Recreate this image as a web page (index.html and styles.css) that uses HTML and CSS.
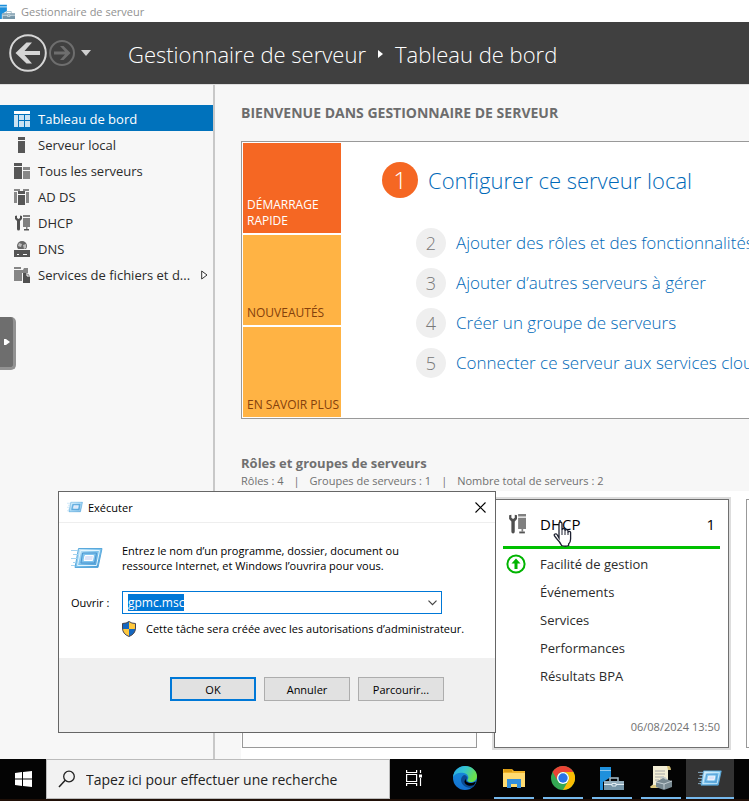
FILE: index.html
```html
<!DOCTYPE html>
<html lang="fr">
<head>
<meta charset="utf-8">
<title>Gestionnaire de serveur</title>
<link rel="stylesheet" href="styles.css">
</head>
<body>
<svg class="defs" aria-hidden="true">
  <defs>
    <symbol id="i-dhcp" viewBox="0 0 16 16">
      <path d="M1 1v3l2 2v8q0 1.500 1.500 1.500T6 14V6l2-2V1L6 .5V3L4.500 4 3 3V.5z" fill="#505050"/>
      <path d="M9 0h7v2H9zM9 3h7v9H9zM12 12h1.500v2H12z" fill="#808080"/>
      <path d="M10 14h5v1.500h-5z" fill="#555"/>
    </symbol>
    <linearGradient id="g-run" x1="0" y1="0" x2="1" y2="1">
      <stop offset="0" stop-color="#d3edfb"/><stop offset=".5" stop-color="#7cc2ec"/><stop offset="1" stop-color="#3f93cf"/>
    </linearGradient>
    <symbol id="i-run" viewBox="0 0 32 24">
      <path d="M7.500 2.500H31l-4 19H4z" fill="url(#g-run)" stroke="#5aa9dc"/>
      <path d="M9.500 4.500h19l-3 15H6.500z" fill="none" stroke="#e2f5ff"/>
      <path d="M11.500 7h14l-2 10H10z" fill="#7fc4ee" stroke="#4a94cf"/>
      <path d="M14 9.500h8.500l-1 5h-8.500z" fill="#dce3f8" stroke="#fff"/>
      <path d="M0 4.500h7M2 8.500h5M0 12.500h6M2 16.500h3M0 19.500h4" stroke="#a3d3f0"/>
    </symbol>
    <symbol id="i-server" viewBox="0 0 24 24">
      <path d="M0 1h11v3H0zM0 5h11v6L3 16v8H0z" fill="#1e90dc"/>
      <path d="M0 4.500h11" stroke="#8cc8ee"/>
      <path d="M10 16v-4h8v4" fill="none" stroke="#a9c0cc" stroke-width="1.500"/>
      <path d="M4 15h20v9H4z" fill="#7696a8"/>
      <path d="M4 15h20v3H4z" fill="#94aebc"/>
      <path d="M4 18.500h8M16 18.500h8M12 17.500h4v2.500h-4z" fill="none" stroke="#e2edf2"/>
    </symbol>
  </defs>
</svg>

<div class="desktop">
  <div class="titlebar">
    <svg class="app-icon" viewBox="0 0 24 24"><use href="#i-server"/></svg>
    <span>Gestionnaire de serveur</span>
  </div>

  <header class="header">
    <button class="nav-btn" aria-label="Précédent">
      <svg width="38" height="38" viewBox="0 0 38 38"><circle cx="19" cy="19" r="17.800" fill="none" stroke="#d6d6d6" stroke-width="2"/><path d="M6.500 19l11-10.500h5.500L15.500 17H31v4H15.500l7.500 8.500h-5.500z" fill="#d6d6d6"/></svg>
    </button>
    <button class="nav-btn" aria-label="Suivant">
      <svg width="26" height="26" viewBox="0 0 26 26"><circle cx="13" cy="13" r="12" fill="none" stroke="#6e6e6e" stroke-width="2"/><path d="M21.500 13l-7 7H11l5-5.500H5v-3h11L11 6h3.500z" fill="#6e6e6e"/></svg>
    </button>
    <button class="nav-btn nav-more" aria-label="Historique">
      <svg width="10" height="6" viewBox="0 0 10 6"><path d="M0 0h10L5 6z" fill="#d0d0d0"/></svg>
    </button>
    <div class="crumbs">
      <span>Gestionnaire de serveur</span>
      <svg width="5" height="8" viewBox="0 0 5 8"><path d="M0 0l5 4-5 4z" fill="#fff"/></svg>
      <span>Tableau de bord</span>
    </div>
  </header>

  <div class="body">
    <nav class="sidebar">
      <a class="item active" href="#"><svg viewBox="0 0 16 16"><path d="M0 0h16v3H0z" fill="#fff"/><path d="M0 4h4v12H0zM5 4h5v5H5zM11 4h5v5h-5zM5 10h5v6H5zM11 10h5v6h-5z" fill="#cbe3f3"/></svg>Tableau de bord</a>
      <a class="item" href="#"><svg viewBox="0 0 16 16"><path d="M4 0h7v3H4zM4 4h7v12H4z" fill="#575757"/></svg>Serveur local</a>
      <a class="item" href="#"><svg viewBox="0 0 16 16"><path d="M0 0h8v3H0zM0 4h8v12H0z" fill="#575757"/><path d="M9 4h7v3H9zM9 8h7v8H9z" fill="#888"/></svg>Tous les serveurs</a>
      <a class="item" href="#"><svg viewBox="0 0 16 16"><path d="M0 0h6v2H3v12H0zM9 0h6v14h-3V2H9z" fill="#888"/><path d="M0 2.500h3M12 2.500h3" stroke="#f7f7f7"/><path d="M4 2h7v3H4zM4 6h7v10H4z" fill="#575757"/></svg>AD DS</a>
      <a class="item" href="#"><svg viewBox="0 0 16 16"><use href="#i-dhcp"/></svg>DHCP</a>
      <a class="item" href="#"><svg viewBox="0 0 16 16"><circle cx="8" cy="5" r="5" fill="#666"/><path d="M5 2l3 1-1 3-3-1zM9 4l3-1v4l-2 1z" fill="#bbb"/><path d="M0 9h16v7H0z" fill="#555"/><path d="M0 8.500h16M3 13.500h2M9 13.500h4" stroke="#f7f7f7"/></svg>DNS</a>
      <a class="item" href="#"><svg viewBox="0 0 16 16"><path d="M0 0h7v2H0zM0 3h9l1-2h4v5H8v8H0z" fill="#858585"/><path d="M9 6h4l3 3v7H9z" fill="#505050"/><path d="M13 6v3h3" fill="none" stroke="#fff"/></svg>Services de fichiers et d...
        <svg class="expand" viewBox="0 0 7 10"><path d="M.7 1v8L6 5z" fill="#fff" stroke="#333"/></svg></a>
    </nav>

    <main class="main">
      <h1>BIENVENUE DANS GESTIONNAIRE DE SERVEUR</h1>
      <section class="welcome">
        <div class="tabs">
          <button class="tab hot">DÉMARRAGE RAPIDE</button>
          <button class="tab">NOUVEAUTÉS</button>
          <button class="tab">EN SAVOIR PLUS</button>
        </div>
        <ol class="steps">
          <li class="first"><b>1</b><a href="#">Configurer ce serveur local</a></li>
          <li><b>2</b><a href="#">Ajouter des rôles et des fonctionnalités</a></li>
          <li><b>3</b><a href="#">Ajouter d’autres serveurs à gérer</a></li>
          <li><b>4</b><a href="#">Créer un groupe de serveurs</a></li>
          <li><b>5</b><a href="#">Connecter ce serveur aux services cloud</a></li>
        </ol>
      </section>
      <div class="groups-head">
        <h2>Rôles et groupes de serveurs</h2>
        <p><span>Rôles : 4</span><i>|</i><span>Groupes de serveurs : 1</span><i>|</i><span>Nombre total de serveurs : 2</span></p>
      </div>
      <section class="tiles">
        <article class="tile quiet"></article>
        <article class="tile hover">
          <div class="tile-head">
            <svg width="18" height="20" viewBox="0 0 16 16" preserveAspectRatio="none"><use href="#i-dhcp"/></svg>
            <h3>DHCP</h3><span class="count">1</span>
            <svg class="cursor" width="19" height="27" viewBox="0 0 19 27"><path d="M6 17V3q0-2 1.500-2T9 3v6q0-1.500 1.500-1.500T12 9v1q0-1.300 1.500-1.300T15 10v1.500q0-1.200 1.300-1.200t1.300 1.200V18q0 3-2 5v1.500q-3 1.500-7 0Q7 21 3.500 17.500L1.500 15q-.8-1.500.5-2t2 .5z" fill="#fff" stroke="#1c2030" stroke-width="1.300"/><path d="M9 9v5M12 10v4M15 11v3" stroke="#1c2030"/></svg>
          </div>
          <ul>
            <li><svg width="20" height="20" viewBox="0 0 20 20"><circle cx="10" cy="10" r="8.600" fill="none" stroke="#00b400" stroke-width="2"/><path d="M10 4.500l4.500 5h-3V15h-3V9.500h-3z" fill="#00b400"/></svg><a href="#">Facilité de gestion</a></li>
            <li><a href="#">Événements</a></li>
            <li><a href="#">Services</a></li>
            <li><a href="#">Performances</a></li>
            <li><a href="#">Résultats BPA</a></li>
          </ul>
          <time>06/08/2024 13:50</time>
        </article>
        <article class="tile"></article>
      </section>
    </main>
  </div>

  <footer class="taskbar">
    <button class="start" aria-label="Démarrer"><svg width="17" height="16" viewBox="0 0 17 16"><path d="M0 2l7-1v6.500H0zM8 1l9-1v7.500H8zM0 8.500h7V15l-7-1zM8 8.500h9V16l-9-1z" fill="#fff"/></svg></button>
    <label class="search">
      <svg width="18" height="18" viewBox="0 0 18 18"><circle cx="11" cy="6.500" r="5.300" fill="none" stroke="#222" stroke-width="1.300"/><path d="M7.200 10.300L1 17" stroke="#222" stroke-width="1.500"/></svg>
      <input type="search" placeholder="Tapez ici pour effectuer une recherche" aria-label="Recherche">
    </label>
    <button class="task" aria-label="Affichage des tâches"><svg width="17" height="16" viewBox="0 0 17 16" fill="none" stroke="#fff" stroke-width="1.200"><path d="M.6 4.500h10v7H.6zM.6 0v2.500h10V0M.6 16v-2.500h10V16M14.500 0v3M14.500 8v8"/><path d="M13 4.500h3v3h-3z" fill="#fff" stroke="none"/></svg></button>
    <button class="task" aria-label="Microsoft Edge"><svg width="24" height="24" viewBox="0 0 24 24">
      <defs><linearGradient id="g-e1" x1="0" y1="0" x2="1" y2=".4"><stop offset="0" stop-color="#27a6e8"/><stop offset=".5" stop-color="#35c5cf"/><stop offset="1" stop-color="#6be04b"/></linearGradient><linearGradient id="g-e2" x1="0" y1="0" x2="0" y2="1"><stop offset="0" stop-color="#168fdc"/><stop offset="1" stop-color="#1470d0"/></linearGradient></defs>
      <circle cx="12" cy="12" r="12" fill="url(#g-e2)"/>
      <path d="M0 11C1 4 6 0 12 0c7 0 12 5 12 10 0 4-3 6-6 6-4 0-4-2-3-3 1-2 0-5-4-6C7 6 2 7 0 11z" fill="url(#g-e1)"/>
      <path d="M8 14c0-3 2-5 4-5 2 1 3 3 2 4-1 2 1 4 5 4 2 0 3-1 4-1-1 3-3 5-5 6C12 22 8 18 8 14z" fill="#0b4a93"/>
      <path d="M13 12.500c-1 3 1 4.500 5 4.500 3 0 4-1.500 5-1.500l-2 3.500c-4 2-10 0-9.500-4z" fill="#000"/>
    </svg></button>
    <button class="task open" aria-label="Explorateur de fichiers"><svg width="22" height="19" viewBox="0 0 22 19"><path d="M0 0h9l2 2h11v16H0z" fill="#f0b429"/><path d="M1 0h8v3H1z" fill="#d99a12"/><path d="M0 4h22v14H0z" fill="#ffdb71"/><path d="M4 10h14v9h-4v-4H8v4H4z" fill="#338edb"/></svg></button>
    <button class="task open" aria-label="Google Chrome"><svg width="24" height="24" viewBox="0 0 24 24"><circle cx="12" cy="12" r="12" fill="#34a853"/><path d="M1.600 6A12 12 0 0 1 22.400 6H12a6 6 0 0 0-5.200 9z" fill="#ea4335"/><path d="M22.400 6A12 12 0 0 1 12 24l5.200-9A6 6 0 0 0 12 6z" fill="#fbbc04"/><circle cx="12" cy="12" r="6" fill="#fff"/><circle cx="12" cy="12" r="4.700" fill="#2874e8"/></svg></button>
    <button class="task open" aria-label="Gestionnaire de serveur"><svg width="24" height="24" viewBox="0 0 24 24"><use href="#i-server"/></svg></button>
    <button class="task open" aria-label="Stratégie de groupe"><svg width="24" height="24" viewBox="0 0 24 24"><path d="M4 0h17q-2 1-2 5v16H1q3-1 3-4z" fill="#f2edd4"/><path d="M18 0h2q2 1 2 4h-3z" fill="#d4c078"/><path d="M1 21q1-2 4-2h5v3H2z" fill="#ddc980"/><path d="M6 5h10M6 8h10M6 11h9M6 14h4" stroke="#a6a6a6"/><path d="M7 16l7-4 9 3v6l-8 3-8-3z" fill="#788991"/><path d="M7 16l8 2 8-3M15 18v5" fill="none" stroke="#c3ced3"/><path d="M12 13v-2l5 1v2" fill="none" stroke="#c0c8cc"/></svg></button>
    <button class="task open current" aria-label="Exécuter"><svg width="24" height="18" viewBox="0 0 32 24"><use href="#i-run"/></svg></button>
  </footer>

  <button class="handle" aria-label="Ouvrir le panneau"><svg width="6" height="6" viewBox="0 0 6 6"><path d="M0 0h2l4 3-4 3H0z" fill="#fff"/></svg></button>

  <form class="dialog" role="dialog" aria-label="Exécuter">
    <div class="dialog-title">
      <svg width="16" height="12" viewBox="0 0 32 24"><use href="#i-run"/></svg>
      <span>Exécuter</span>
      <button type="button" class="close" aria-label="Fermer"><svg width="11" height="11" viewBox="0 0 11 11"><path d="M.5.5l10 10M10.500.5l-10 10" stroke="#000" stroke-width="1.100"/></svg></button>
    </div>
    <div class="dialog-body">
      <svg class="big" width="32" height="24" viewBox="0 0 32 24"><use href="#i-run"/></svg>
      <p>Entrez le nom d’un programme, dossier, document ou ressource Internet, et Windows l’ouvrira pour vous.</p>
      <label for="cmd">Ouvrir :</label>
      <div class="combo">
        <input id="cmd" type="text" value="gpmc.msc" spellcheck="false">
        <button type="button" aria-label="Liste"><svg width="9" height="6" viewBox="0 0 9 6"><path d="M.5.7l4 4 4-4" fill="none" stroke="#444" stroke-width="1.200"/></svg></button>
      </div>
      <div class="note">
        <svg width="14" height="16" viewBox="0 0 14 16"><path d="M7 .5Q9.500 2.500 13.500 2.500V7q0 6-6.500 8.500Q.5 13 .5 7V2.500Q4.500 2.500 7 .5z" fill="#ffc83d"/><path d="M7 .5V8H.5V2.500Q4.500 2.500 7 .5zM7 8h6.400q-.4 5-6.400 7.500z" fill="#1467c0"/><path d="M7 .5Q9.500 2.500 13.500 2.500V7q0 6-6.500 8.500Q.5 13 .5 7V2.500Q4.500 2.500 7 .5z" fill="none" stroke="#445"/></svg>
        <span>Cette tâche sera créée avec les autorisations d’administrateur.</span>
      </div>
    </div>
    <div class="dialog-actions">
      <button type="button" class="default">OK</button>
      <button type="button">Annuler</button>
      <button type="button">Parcourir...</button>
    </div>
  </form>
</div>
<script src="run.js"></script>
</body>
</html>
```
FILE: styles.css
```css
* { box-sizing: border-box; }
body, h1, h2, h3, p, ul, ol { margin: 0; padding: 0; }
ul, ol { list-style: none; }
body {
  font-family: "Open Sans", "Noto Sans", sans-serif;
  font-size: 13px;
  color: #2b2b2b;
  background: #f7f7f7;
}
button, input { font: inherit; color: inherit; border: 0; border-radius: 0; padding: 0; background: none; outline: 0; }
a { color: inherit; text-decoration: none; }
svg { display: block; flex: none; }
.defs { position: absolute; width: 0; height: 0; }

.desktop {
  position: relative;
  display: flex;
  flex-direction: column;
  min-height: 100vh;
  overflow: hidden;
}

.titlebar {
  display: flex;
  align-items: center;
  gap: 6px;
  height: 22px;
  background: #fff;
  color: #919191;
  font-size: 11px;
}
.app-icon { width: 15px; height: 15px; }

.header {
  display: flex;
  align-items: center;
  height: 62px;
  padding-left: 9px;
  background: #404040;
  color: #fff;
}
.nav-btn { margin-right: 2px; }
.nav-more { margin-left: 4px; }
.crumbs {
  display: flex;
  align-items: center;
  gap: 12px;
  margin-left: 35px;
  font-size: 22px;
  font-weight: 300;
  line-height: 30px;
  padding-top: 2px;
  white-space: nowrap;
}

.body { display: flex; flex: 1; border-top: 1px solid #ddd; }
.sidebar {
  flex: none;
  width: 215px;
  padding-top: 20px;
  border-right: 2px solid #c8c8c8;
}
.item {
  display: flex;
  align-items: center;
  gap: 8px;
  height: 26px;
  padding: 1px 0 0 14px;
  white-space: nowrap;
}
.item svg { width: 16px; height: 16px; }
.item .expand { width: 7px; height: 10px; margin-left: 3px; }
.item.active { background: #0072bc; color: #fff; }

.main { flex: 1; min-width: 0; overflow: hidden; padding-left: 26px; display: flex; flex-direction: column; }
h1 { margin-top: 18px; font-size: 14px; line-height: 20px; font-weight: 700; color: #6d6d6d; white-space: nowrap; }
.welcome {
  display: flex;
  margin-top: 18px;
  padding: 1px;
  border: 1px solid #999;
  border-right: 0;
  background: #fff;
}
.tabs { display: grid; gap: 2px; flex: none; width: 98px; grid-template-columns: 98px; grid-auto-rows: 90px; }
.tab {
  display: flex;
  align-items: flex-end;
  padding: 0 0 4px 4px;
  background: #ffb344;
  color: #84400c;
  font-size: 12px;
  line-height: 16px;
  text-align: left;
  white-space: nowrap;
}
.tab.hot { background: #f56723; color: #fff; white-space: normal; }
.steps { display: grid; gap: 10px; align-content: start; padding: 19px 0 0 41px; min-width: 0; }
.steps li { display: flex; align-items: center; gap: 10px; padding-left: 34px; white-space: nowrap; }
.steps b {
  flex: none;
  width: 30px;
  line-height: 30px;
  border-radius: 50%;
  background: #efefef;
  color: #777;
  font-size: 18px;
  font-weight: 300;
  text-align: center;
}
.steps a { font-size: 17px; line-height: 30px; font-weight: 300; color: #0069b8; }
.steps .first { padding-left: 0; margin-bottom: 20px; }
.steps .first b { width: 36px; line-height: 36px; font-size: 24px; background: #f56723; color: #fff; }
.steps .first a { font-size: 22px; line-height: 36px; }

.groups-head { margin-top: 34px; color: #707070; white-space: nowrap; }
h2 { font-size: 13px; line-height: 20px; }
.groups-head p { display: flex; gap: 10px; font-size: 11px; line-height: 16px; padding-bottom: 2px; }
.groups-head i { font-style: normal; }

.tiles { display: flex; flex: 1; gap: 17px; padding: 8px 0 11px 1px; background: #fff; }
.tile { flex: none; width: 235px; min-height: 249px; border: 1px solid #999; background: #fff; }
.tile.quiet { background: #fcfcfc; }
.tile.hover {
  display: flex;
  flex-direction: column;
  padding: 8px;
  border-color: #707070;
  box-shadow: 0 0 0 2px #ddd;
}
.tile-head {
  position: relative;
  display: flex;
  align-items: center;
  gap: 14px;
  height: 41px;
  padding: 0 5px 6px;
  border-bottom: 3px solid #00c000;
  color: #000;
}
.tile-head h3, .count { font-size: 15px; font-weight: 400; }
.count { margin-left: auto; }
.cursor { position: absolute; left: 50px; top: 13px; }
.tile ul { padding-top: 1px; }
.tile li { display: flex; align-items: center; gap: 14px; height: 28px; padding-left: 3px; }
.tile li + li { padding-left: 37px; }
.tile time { margin-top: auto; text-align: right; font-size: 11px; line-height: 24px; color: #707070; }

.taskbar { display: flex; height: 42px; background: #040404; border-bottom: 2px solid #201008; }
.start { display: grid; place-items: center; width: 46px; }
.search {
  display: flex;
  align-items: center;
  gap: 10px;
  width: 344px;
  padding-left: 11px;
  background: #f2f2f2;
  border: 1px solid #bbb;
}
.search input { flex: 1; min-width: 0; font-size: 14px; }
.search input::placeholder { color: #222; opacity: 1; }
.task {
  display: grid;
  place-items: center;
  width: 40px;
  margin: 0 0 0 9px;
  border-bottom: 2px solid transparent;
}
.search + .task { margin-left: 4px; }
.search + .task + .task { margin-left: 11px; }
.task.open { border-bottom-color: #76b9ed; }
.task.current { width: 48px; margin-left: 5px; background: #333; }

.handle {
  position: absolute;
  left: 0;
  top: 317px;
  display: grid;
  place-items: center;
  width: 16px;
  height: 53px;
  background: #6e6e6e;
  border-right: 3px solid #929292;
  border-bottom: 3px solid #929292;
  border-radius: 0 5px 5px 0;
}

.dialog {
  position: absolute;
  left: 58px;
  top: 491px;
  width: 438px;
  border: 1px solid #666;
  background: #fff;
  color: #000;
  font-size: 11px;
}
.dialog-title {
  display: flex;
  align-items: center;
  gap: 5px;
  height: 31px;
  padding: 0 9px 0 8px;
  border-bottom: 1px solid #eee;
}
.close { margin-left: auto; }
.dialog-body {
  display: grid;
  grid-template-columns: 39px 1fr;
  column-gap: 12px;
  align-items: center;
  padding: 20px 12px 21px;
}
.dialog-body p { width: 300px; line-height: 15px; }
.combo {
  display: flex;
  width: 320px;
  height: 23px;
  margin-top: 18px;
  border: 1px solid #0078d7;
}
.dialog-body label { margin-top: 18px; white-space: nowrap; }
.combo input { flex: 1; min-width: 0; padding-left: 5px; font-size: 12px; }
.combo input::selection { background: #0078d7; color: #fff; }
.combo button { width: 17px; display: grid; place-items: center; }
.note { grid-column: 2; display: flex; align-items: center; gap: 10px; margin-top: 7px; line-height: 16px; white-space: nowrap; }
.dialog-actions {
  display: flex;
  justify-content: flex-end;
  gap: 8px;
  padding: 19px 51px 31px;
  background: #f0f0f0;
}
.dialog-actions button { width: 86px; height: 24px; background: #e1e1e1; border: 1px solid #adadad; }
.dialog-actions .default { border: 2px solid #0078d7; }
```
FILE: run.js
```js
const field = document.getElementById("cmd");
field.focus();
field.select();
```
